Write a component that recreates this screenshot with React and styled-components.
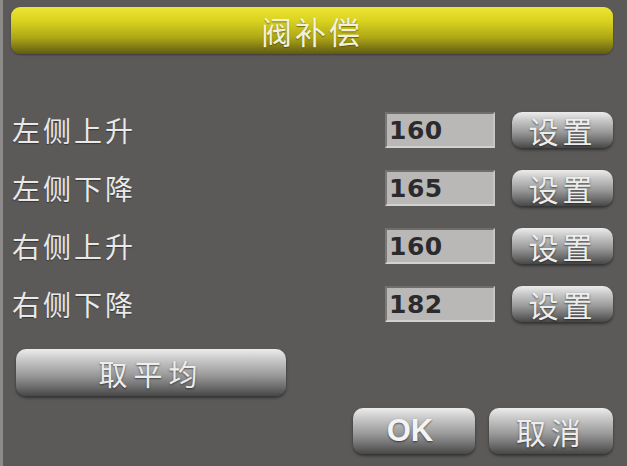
import styled, { createGlobalStyle } from "styled-components";

const GlobalStyle = createGlobalStyle`
  html, body {
    margin: 0;
    padding: 0;
    background: #5b5a59;
  }
  * {
    box-sizing: border-box;
  }
`;

const Screen = styled.div`
  width: 627px;
  height: 466px;
  background: #5b5a59;
  border-left: 3px solid #8c8b8a;
  display: flex;
  flex-direction: column;
  padding: 7px 14px 0 8px;
  font-family: "Noto Sans CJK SC", "Noto Sans", sans-serif;
  overflow: hidden;
`;

const TitleBar = styled.div`
  height: 47px;
  border-radius: 9px;
  background: linear-gradient(
    to bottom,
    #ebe534 0%,
    #d9d21f 30%,
    #aea716 65%,
    #5f5b12 100%
  );
  display: flex;
  align-items: center;
  justify-content: center;
  color: #f2f1dc;
  font-size: 31px;
  letter-spacing: 3px;
  text-shadow: 0 1px 1px rgba(60, 55, 0, 0.6);
  box-shadow: 0 1px 2px rgba(0, 0, 0, 0.35);
`;

const Rows = styled.div`
  display: flex;
  flex-direction: column;
  gap: 22px;
  margin-top: 58px;
`;

const Row = styled.div`
  height: 36px;
  display: flex;
  align-items: center;
`;

const Label = styled.div`
  flex: 1;
  padding-left: 1px;
  color: #e9e9e9;
  font-size: 28px;
  letter-spacing: 3px;
  text-shadow: 0 1px 1px rgba(0, 0, 0, 0.4);
`;

const ValueBox = styled.div`
  width: 110px;
  height: 36px;
  background: #b9b8b7;
  border-top: 2px solid #6f6e6d;
  border-left: 2px solid #7a7978;
  border-bottom: 2px solid #d2d1d0;
  border-right: 2px solid #c6c5c4;
  display: flex;
  align-items: center;
  padding-left: 2px;
  font-family: "DejaVu Sans", sans-serif;
  font-weight: bold;
  font-size: 25px;
  color: #2b2b2d;
  letter-spacing: 0.5px;
`;

const GlossButton = styled.div`
  width: ${(p) => p.$w}px;
  height: ${(p) => p.$h}px;
  margin-left: ${(p) => p.$ml || 0}px;
  border-radius: 10px;
  background: linear-gradient(
    to bottom,
    #ececec 0%,
    #c9c9c9 22%,
    #9b9b9b 55%,
    #6a6a6a 82%,
    #474747 100%
  );
  box-shadow: 0 2px 3px rgba(0, 0, 0, 0.45);
  display: flex;
  align-items: center;
  justify-content: center;
  color: #ededed;
  font-size: ${(p) => p.$fs || 29}px;
  letter-spacing: ${(p) => p.$ls ?? 4}px;
  text-shadow: 0 1px 2px rgba(0, 0, 0, 0.55);
`;

const OkText = styled.span`
  font-family: "Liberation Sans", Arial, sans-serif;
  font-weight: bold;
  font-size: 31px;
  letter-spacing: 0;
  margin-right: 8px;
  color: #f4f4f4;
`;

const AverageRow = styled.div`
  margin-top: 27px;
  padding-left: 5px;
  display: flex;
`;

const Footer = styled.div`
  margin-top: 12px;
  display: flex;
  justify-content: flex-end;
  gap: 14px;
`;

const rows = [
  { label: "左侧上升", value: "160" },
  { label: "左侧下降", value: "165" },
  { label: "右侧上升", value: "160" },
  { label: "右侧下降", value: "182" },
];

export default function App() {
  return (
    <>
      <GlobalStyle />
      <Screen>
        <TitleBar>阀补偿</TitleBar>
        <Rows>
          {rows.map((r) => (
            <Row key={r.label}>
              <Label>{r.label}</Label>
              <ValueBox>{r.value}</ValueBox>
              <GlossButton $w={101} $h={36} $ml={17} $fs={30} $ls={4}>
                设置
              </GlossButton>
            </Row>
          ))}
        </Rows>
        <AverageRow>
          <GlossButton $w={270} $h={47} $ls={6}>
            取平均
          </GlossButton>
        </AverageRow>
        <Footer>
          <GlossButton $w={122} $h={46}>
            <OkText>OK</OkText>
          </GlossButton>
          <GlossButton $w={124} $h={46} $fs={30} $ls={5}>
            取消
          </GlossButton>
        </Footer>
      </Screen>
    </>
  );
}
